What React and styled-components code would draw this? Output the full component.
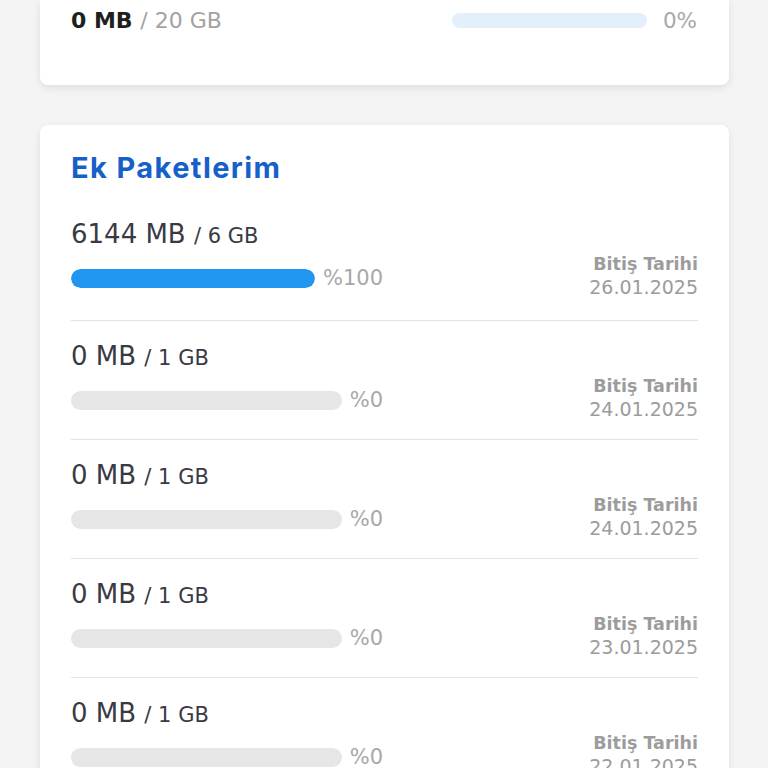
import React from 'react'
import styled, { createGlobalStyle } from 'styled-components'

const GlobalStyle = createGlobalStyle`
  html, body {
    margin: 0;
    padding: 0;
    background: #f4f4f4;
    font-family: "DejaVu Sans", "Liberation Sans", sans-serif;
  }
`

const Page = styled.div`
  display: flex;
  flex-direction: column;
  gap: 40px;
  padding: 0 39px 0 40px;
  height: 768px;
  overflow: hidden;
`

const Card = styled.section`
  background: #fff;
  border-radius: ${p => (p.$top ? '0 0 8px 8px' : '8px')};
  box-shadow: 0 3px 8px rgba(0, 0, 0, 0.09);
  padding: ${p => (p.$top ? '0 32px 45px 31px' : '26px 31px 0')};
  flex-shrink: 0;
`

const QuotaRow = styled.div`
  display: flex;
  align-items: center;
  justify-content: space-between;
  height: 40px;
`

const QuotaText = styled.div`
  font-size: 22px;
  font-weight: 700;
  color: #1f1f1f;
  span {
    color: #a3a3a3;
    font-weight: 400;
  }
`

const QuotaBar = styled.div`
  display: flex;
  align-items: center;
  gap: 16px;
`

const Track = styled.div`
  height: ${p => p.$h}px;
  border-radius: 10px;
  background: ${p => p.$bg};
  overflow: hidden;
  flex: ${p => (p.$w ? 'none' : '1')};
  width: ${p => (p.$w ? `${p.$w}px` : 'auto')};
`

const Fill = styled.div`
  height: 100%;
  background: #2196f0;
  border-radius: 10px;
`

const Pct = styled.span`
  font-size: 21.5px;
  color: #a8a8a8;
`

const Title = styled.h2`
  margin: 0 0 14px;
  font-family: Inter, "Open Sans", sans-serif;
  font-size: 29px;
  line-height: 34px;
  letter-spacing: 1.4px;
  font-weight: 700;
  color: #1560c9;
`

const Row = styled.div`
  display: flex;
  align-items: flex-end;
  justify-content: space-between;
  padding: 21px 0 ${p => (p.$first ? 21 : 18)}px;
  border-bottom: 1px solid #e3e3e3;
  &:last-child {
    border-bottom: none;
  }
`

const Left = styled.div`
  width: 312px;
  display: flex;
  flex-direction: column;
  gap: 20px;
  padding-bottom: 11px;
`

const Amount = styled.div`
  font-size: 26px;
  line-height: 28px;
  height: 28px;
  color: #3a3a44;
  white-space: nowrap;
  small {
    font-size: 21px;
    line-height: 1;
  }
`

const BarLine = styled.div`
  display: flex;
  align-items: center;
  gap: 8px;
  height: 20px;
`

const RowPct = styled.span`
  font-size: 21px;
  line-height: 20px;
  color: #a8a8a8;
`

const Right = styled.div`
  text-align: right;
  color: #9c9c9c;
`

const EndLabel = styled.div`
  font-size: 17.5px;
  line-height: 23px;
  font-weight: 700;
`

const EndDate = styled.div`
  font-size: 19px;
  line-height: 23px;
`

const packs = [
  { used: '6144 MB', total: '6 GB', pct: 100, date: '26.01.2025' },
  { used: '0 MB', total: '1 GB', pct: 0, date: '24.01.2025' },
  { used: '0 MB', total: '1 GB', pct: 0, date: '24.01.2025' },
  { used: '0 MB', total: '1 GB', pct: 0, date: '23.01.2025' },
  { used: '0 MB', total: '1 GB', pct: 0, date: '22.01.2025' },
]

export default function App() {
  return (
    <>
      <GlobalStyle />
      <Page>
        <Card $top>
          <QuotaRow>
            <QuotaText>
              0 MB <span>/ 20 GB</span>
            </QuotaText>
            <QuotaBar>
              <Track $h={15} $w={195} $bg="#e3f0fb" />
              <Pct>0%</Pct>
            </QuotaBar>
          </QuotaRow>
        </Card>

        <Card>
          <Title>Ek Paketlerim</Title>
          {packs.map((p, i) => (
            <Row key={i} $first={i === 0}>
              <Left>
                <Amount>
                  {p.used} <small>/ {p.total}</small>
                </Amount>
                <BarLine>
                  <Track $h={19} $bg="#e6e6e6">
                    <Fill style={{ width: `${p.pct}%` }} />
                  </Track>
                  <RowPct>%{p.pct}</RowPct>
                </BarLine>
              </Left>
              <Right>
                <EndLabel>Bitiş Tarihi</EndLabel>
                <EndDate>{p.date}</EndDate>
              </Right>
            </Row>
          ))}
        </Card>
      </Page>
    </>
  )
}
